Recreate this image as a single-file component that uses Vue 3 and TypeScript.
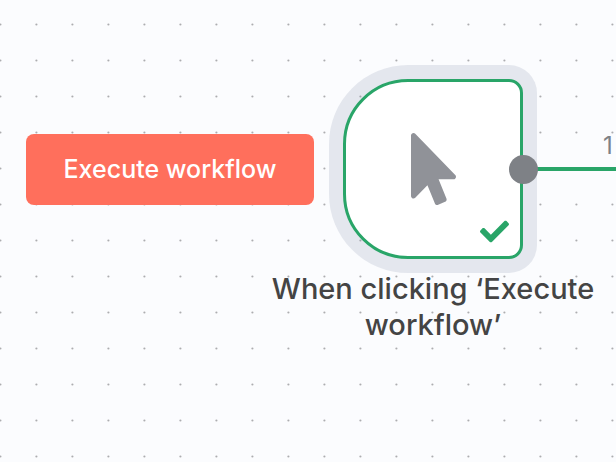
<script setup lang="ts">
interface TriggerNode {
  label: string
  action: string
  items: string
}

const trigger: TriggerNode = {
  label: 'When clicking ‘Execute workflow’',
  action: 'Execute workflow',
  items: '1',
}
</script>

<template>
  <main class="canvas">
    <svg class="grid" aria-hidden="true">
      <defs>
        <pattern id="dots" x="-18" y="6" width="36" height="36" patternUnits="userSpaceOnUse">
          <circle cx="18.4" cy="18.5" r="1.1" />
        </pattern>
      </defs>
      <rect width="100%" height="100%" fill="url(#dots)" />
    </svg>

    <button class="execute" type="button">{{ trigger.action }}</button>

    <section class="node-group">
      <div class="node">
        <svg class="pointer" viewBox="0 0 320 512" aria-hidden="true">
          <path d="M302.189 329.126H196.105l55.831 135.993c3.889 9.428-.555 19.999-9.444 23.999l-49.165 21.427c-9.165 4-19.443-.571-23.332-9.714l-53.053-129.136-86.664 89.138C18.729 472.71 0 463.554 0 447.977V18.299C0 1.899 19.921-6.096 30.277 5.443l284.412 292.542c11.472 11.179 3.007 31.141-12.5 31.141z" />
        </svg>
        <svg class="check" viewBox="0 0 512 512" aria-hidden="true">
          <path d="M173.898 439.404l-166.4-166.4c-9.997-9.997-9.997-26.206 0-36.204l36.203-36.204c9.997-9.998 26.207-9.998 36.204 0L192 312.69 432.095 72.596c9.997-9.997 26.207-9.997 36.204 0l36.203 36.204c9.997 9.997 9.997 26.206 0 36.204l-294.4 294.401c-9.998 9.997-26.207 9.997-36.204-.001z" />
        </svg>
      </div>
      <p class="label">{{ trigger.label }}</p>
    </section>

    <div class="edge"></div>
    <span class="items">{{ trigger.items }}</span>
    <span class="handle"></span>
  </main>
</template>

<style>
body {
  margin: 0;
}
</style>

<style scoped>
.canvas {
  position: relative;
  min-height: 100vh;
  overflow: hidden;
  background: #fbfcfe;
  font-family: Inter, "Liberation Sans", sans-serif;
}

.grid {
  position: absolute;
  inset: 0;
  width: 100%;
  height: 100%;
  fill: #acadb0;
}

.execute {
  position: absolute;
  left: 26px;
  top: 134px;
  width: 288px;
  height: 71px;
  padding: 0 0 2px;
  border: 0;
  border-radius: 8px;
  background: #ff6f5c;
  color: #fff;
  font: inherit;
  font-size: 25px;
  font-weight: 500;
  white-space: nowrap;
}

.node-group {
  position: absolute;
  left: 253px;
  top: 79px;
  width: 360px;
  display: flex;
  flex-direction: column;
  align-items: center;
  gap: 12px;
}

.node {
  position: relative;
  box-sizing: border-box;
  width: 180px;
  height: 180px;
  display: flex;
  align-items: center;
  justify-content: center;
  border: 3px solid #29a568;
  border-radius: 65px 14px 14px 65px;
  background: #fff;
  box-shadow: 0 0 0 14px rgba(118, 128, 160, 0.17);
}

.pointer {
  width: 45px;
  height: 72px;
  fill: #909298;
}

.check {
  position: absolute;
  right: 11px;
  bottom: 10px;
  width: 29px;
  height: 29px;
  fill: #29a568;
}

.label {
  margin: 0;
  color: #444;
  font-size: 29px;
  font-weight: 500;
  line-height: 36px;
  text-align: center;
}

.edge {
  position: absolute;
  left: 523px;
  right: 0;
  top: 167px;
  height: 4px;
  background: #29a568;
}

.handle {
  position: absolute;
  left: 509px;
  top: 155px;
  width: 29px;
  height: 29px;
  border-radius: 50%;
  background: #7e8186;
}

.items {
  position: absolute;
  left: 603px;
  top: 131px;
  color: #7e8186;
  font-size: 24px;
  line-height: 30px;
}
</style>
